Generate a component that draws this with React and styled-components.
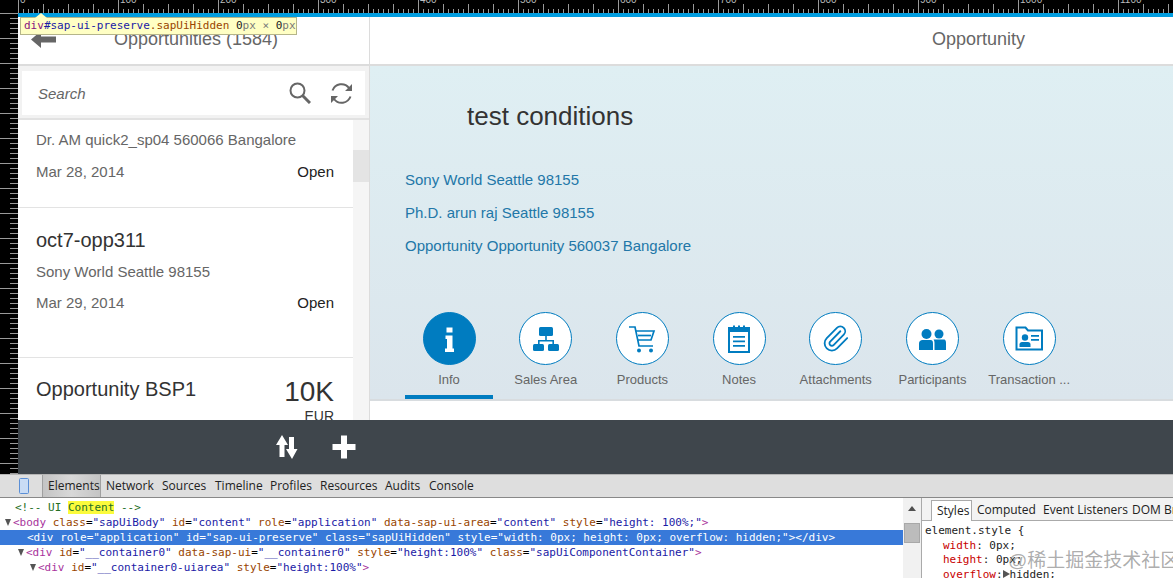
import React from 'react'
import styled, { createGlobalStyle } from 'styled-components'
import { Paperclip } from 'lucide-react'

const GlobalStyle = createGlobalStyle`
  html, body { margin: 0; padding: 0; background: #fff; }
  * { box-sizing: border-box; }
`

const Page = styled.div`
  position: relative;
  width: 1173px;
  height: 578px;
  overflow: hidden;
  font-family: "Liberation Sans", Arial, sans-serif;
`
const RulerTop = styled.svg`
  display: block;
  width: 1173px;
  height: 13px;
  background: #000;
`
const RulerLeft = styled.svg`
  display: block;
  flex: none;
  width: 18px;
  height: 461px;
  background: #000;
`
const Shell = styled.div`
  display: flex;
  height: 461px;
`
const Main = styled.div`
  flex: 1;
  min-width: 0;
  display: flex;
  flex-direction: column;
`
const BlueBar = styled.div`
  height: 4px;
  background: #009de0;
`
const Panels = styled.div`
  display: flex;
  height: 403px;
`
const Master = styled.div`
  flex: none;
  width: 352px;
  border-right: 1px solid #dcdcdc;
  display: flex;
  flex-direction: column;
`
const HeaderBar = styled.div`
  flex: none;
  height: 49px;
  border-bottom: 2px solid #dcdcdc;
  display: flex;
  align-items: center;
  position: relative;
  padding: ${(p) => (p.$detail ? '0 0 2px 562px' : '0 0 2px 96px')};
  font-size: 18px;
  color: #666;
  white-space: nowrap;
`
const BackIcon = styled.svg`
  position: absolute;
  left: 13px;
  top: 14px;
  width: 26px;
  height: 17px;
`
const SearchWrap = styled.div`
  flex: none;
  height: 54px;
  padding: 5px 4px 5px;
  background: #f2f2f2;
  border-bottom: 2px solid #e2e2e2;
`
const SearchInner = styled.div`
  height: 44px;
  background: #fff;
  display: flex;
  align-items: center;
  padding: 0 12px 0 16px;
`
const SearchText = styled.span`
  flex: 1;
  font-size: 15px;
  font-style: italic;
  color: #666;
`
const ToolIcon = styled.svg`
  display: block;
  width: ${(p) => p.$size}px;
  height: ${(p) => p.$size}px;
  margin-left: ${(p) => p.$gap || 0}px;
`
const ListArea = styled.div`
  flex: 1;
  min-height: 0;
  display: flex;
  overflow: hidden;
`
const List = styled.div`
  flex: 1;
  min-width: 0;
  overflow: hidden;
`
const ScrollTrack = styled.div`
  flex: none;
  width: 16px;
  background: #f5f5f5;
  padding-top: 30px;
`
const ScrollThumb = styled.div`
  height: 32px;
  background: #e4e4e4;
`
const Item = styled.div`
  height: ${(p) => p.$height}px;
  padding: 0 19px 0 18px;
  border-bottom: 1px solid #e3e3e3;
`
const ItemRow = styled.div`
  display: flex;
  justify-content: space-between;
  align-items: ${(p) => p.$top ? 'flex-start' : 'center'};
  margin-top: ${(p) => p.$mt || 0}px;
  height: ${(p) => p.$h || 20}px;
`
const ItemTitle = styled.div`
  font-size: 20px;
  line-height: 24px;
  color: #333;
`
const ItemSub = styled.div`
  font-size: 15px;
  line-height: 20px;
  color: #666;
`
const ItemStatus = styled.div`
  font-size: 15px;
  line-height: 20px;
  color: #222;
`
const Amount = styled.div`
  text-align: right;
  color: #333;
  font-size: 28px;
  line-height: 30px;
`
const Currency = styled.div`
  font-size: 14px;
  line-height: 16px;
  margin-top: 1px;
`
const Detail = styled.div`
  flex: 1;
  min-width: 0;
  display: flex;
  flex-direction: column;
`
const DetailHead = styled.div`
  height: 335px;
  background: linear-gradient(180deg, #dfeff3 0%, #dbe5ec 100%);
  border-bottom: 2px solid #d8dcdf;
  display: flex;
  flex-direction: column;
  padding-left: 35px;
`
const DetailTitle = styled.div`
  margin: 35px 0 0 62px;
  font-size: 26px;
  line-height: 30px;
  color: #333;
`
const Links = styled.div`
  margin-top: 32px;
  display: flex;
  flex-direction: column;
`
const LinkText = styled.div`
  font-size: 15px;
  line-height: 33px;
  color: #2277a8;
`
const Tabs = styled.div`
  margin-top: auto;
  display: flex;
  gap: 8.7px;
`
const Tab = styled.div`
  width: 88px;
  height: 87px;
  display: flex;
  flex-direction: column;
  align-items: center;
  border-bottom: 4px solid ${(p) => (p.$active ? '#007cc0' : 'transparent')};
`
const TabCircle = styled.div`
  width: 53px;
  height: 53px;
  border-radius: 50%;
  border: 1.5px solid #007cc0;
  background: ${(p) => (p.$active ? '#007cc0' : '#fff')};
  color: ${(p) => (p.$active ? '#fff' : '#007cc0')};
  display: flex;
  align-items: center;
  justify-content: center;
`
const TabLabel = styled.div`
  margin-top: 7px;
  font-size: 13px;
  line-height: 15px;
  color: #666;
  white-space: nowrap;
`
const Footer = styled.div`
  height: 54px;
  background: #3f464c;
  display: flex;
  align-items: center;
  padding-left: 257px;
`
const FooterIcon = styled.svg`
  display: block;
  width: 26px;
  height: 26px;
  margin-right: 30px;
`
const DevTools = styled.div`
  height: 104px;
  display: flex;
  flex-direction: column;
  background: #fff;
  overflow: hidden;
`
const DevToolbar = styled.div`
  flex: none;
  height: 24px;
  background: #dedede;
  border-top: 1px solid #b5b5b5;
  border-bottom: 1px solid #888;
  display: flex;
  align-items: stretch;
  font-family: "Open Sans", "Liberation Sans", sans-serif;
  font-size: 12px;
  color: #222;
`
const PhoneIcon = styled.svg`
  display: block;
  width: 10px;
  height: 16px;
  margin: 3px 13px 0 19px;
`
const DevTab = styled.div`
  width: ${(p) => p.$w}px;
  line-height: 22px;
  padding-left: 5px;
  white-space: nowrap;
  ${(p) => p.$active && `
    background: linear-gradient(90deg, #c4c4c4 0%, #d8d8d8 50%, #c4c4c4 100%);
    border-left: 1px solid #a0a0a0;
    border-right: 1px solid #a0a0a0;
  `}
`
const DevSplit = styled.div`
  flex: 1;
  min-height: 0;
  display: flex;
`
const Elements = styled.div`
  flex: none;
  width: 903px;
  padding-top: 2px;
  overflow: hidden;
  font-family: "DejaVu Sans Mono", "Liberation Mono", monospace;
  font-size: 11px;
`
const Row = styled.div`
  height: 15px;
  line-height: 15px;
  white-space: nowrap;
  padding-left: ${(p) => p.$indent}px;
  display: flex;
  align-items: center;
  background: ${(p) => (p.$selected ? '#3879d9' : 'transparent')};
  color: ${(p) => (p.$selected ? '#fff' : 'inherit')};
`
const Arrow = styled.i`
  flex: none;
  width: 0;
  height: 0;
  margin-right: 2px;
  border-left: 3.5px solid transparent;
  border-right: 3.5px solid transparent;
  border-top: 7px solid #555;
`
const Tag = styled.span`
  color: ${(p) => (p.$white ? '#fff' : '#a8339c')};
`
const Attr = styled.span`
  color: ${(p) => (p.$white ? '#fff' : '#994500')};
`
const Val = styled.span`
  color: ${(p) => (p.$white ? '#fff' : '#1a1aa6')};
`
const Comment = styled.span`
  color: #236e25;
`
const Mark = styled.span`
  background: #fbfb3c;
`
const DevScroll = styled.div`
  flex: none;
  width: 19px;
  background: #f1f1f1;
  border-right: 1px solid #aaa;
  display: flex;
  flex-direction: column;
  align-items: center;
  padding-top: 8px;
`
const ScrollUp = styled.i`
  width: 0;
  height: 0;
  border-left: 4px solid transparent;
  border-right: 4px solid transparent;
  border-bottom: 5px solid #505050;
`
const DevThumb = styled.div`
  width: 16px;
  height: 20px;
  margin-top: 12px;
  background: #bcbcbc;
  border: 1px solid #a8a8a8;
`
const StylesPane = styled.div`
  flex: 1;
  min-width: 0;
  display: flex;
  flex-direction: column;
  overflow: hidden;
`
const StylesTabs = styled.div`
  flex: none;
  height: 23px;
  padding: 2px 0 0 9px;
  display: flex;
  background: #f3f3f3;
  border-bottom: 1px solid #aaa;
  font-family: "Open Sans", "Liberation Sans", sans-serif;
  font-size: 12px;
  color: #222;
  white-space: nowrap;
`
const StylesTab = styled.div`
  flex: none;
  width: ${(p) => p.$w}px;
  line-height: 20px;
  padding-left: 5px;
  ${(p) => p.$active && `
    background: #fff;
    border: 1px solid #aaa;
    border-bottom: none;
    height: 21px;
  `}
`
const Css = styled.div`
  font-family: "DejaVu Sans Mono", "Liberation Mono", monospace;
  font-size: 11px;
  padding: 3px 0 0 3px;
`
const CssLine = styled.div`
  height: 14.5px;
  line-height: 14.5px;
  white-space: nowrap;
  color: #222;
  padding-left: ${(p) => (p.$prop ? 18 : 0)}px;
`
const CssProp = styled.span`
  color: #c80000;
`
const CssTri = styled.i`
  display: inline-block;
  width: 0;
  height: 0;
  border-top: 4px solid transparent;
  border-bottom: 4px solid transparent;
  border-left: 7px solid #555;
`
const Tooltip = styled.div`
  position: absolute;
  left: 20px;
  top: 17px;
  height: 18px;
  width: 277px;
  padding-left: 3px;
  background: #ffffc4;
  border: 1px solid #b5b58a;
  font-family: "DejaVu Sans Mono", "Liberation Mono", monospace;
  font-size: 11px;
  line-height: 16px;
  white-space: nowrap;
  color: #777;
  &::before {
    content: "";
    position: absolute;
    left: 14px;
    top: -5px;
    border-left: 6px solid transparent;
    border-right: 6px solid transparent;
    border-bottom: 5px solid #ffffc4;
  }
`
const TipTag = styled.span`
  color: #881280;
`
const TipId = styled.span`
  color: #1a1aa6;
`
const TipClass = styled.span`
  color: #994500;
`
const TipNum = styled.span`
  color: #222;
`
const Watermark = styled.div`
  position: absolute;
  left: 1008px;
  top: 549px;
  font-family: "Liberation Sans", "Noto Sans CJK SC", sans-serif;
  font-size: 19px;
  line-height: 24px;
  color: rgba(120, 120, 120, 0.62);
  white-space: nowrap;
`

const topTicks = Array.from({ length: 235 }, (_, i) => i * 5)
const leftTicks = Array.from({ length: 93 }, (_, i) => i * 5)
const tabs = [
  { label: 'Info', active: true, icon: 'info' },
  { label: 'Sales Area', icon: 'org' },
  { label: 'Products', icon: 'cart' },
  { label: 'Notes', icon: 'notes' },
  { label: 'Attachments', icon: 'clip' },
  { label: 'Participants', icon: 'people' },
  { label: 'Transaction ...', icon: 'card' }
]

const TabIcon = ({ name }) => {
  if (name === 'clip') return <Paperclip size={29} strokeWidth={1.5} />
  const size = 30
  return (
    <svg width={size} height={size} viewBox="0 0 30 30" fill="currentColor">
      {name === 'info' && (
        <path d="M12.5 3.5h6v5h-6zM11.5 11.5h7v13h1.5v3.5h-9v-3.5h2v-9.5h-1.5z" />
      )}
      {name === 'org' && (
        <>
          <rect x="8" y="3" width="14" height="9" rx="1.5" />
          <rect x="2" y="20" width="11" height="7" rx="1.5" />
          <rect x="17" y="20" width="11" height="7" rx="1.5" />
          <path d="M14.2 12h1.6v4H23v4h-1.6v-2.4H8.6V20H7v-4h7.2z" />
        </>
      )}
      {name === 'cart' && (
        <>
          <path d="M2 3h6l4 19h14" fill="none" stroke="currentColor" strokeWidth="1.7" />
          <path d="M9 7h18l-3 9H11" fill="none" stroke="currentColor" strokeWidth="1.7" />
          <path d="M11 11.5h13" fill="none" stroke="currentColor" strokeWidth="1.7" />
          <circle cx="12" cy="26.5" r="2" />
          <circle cx="24" cy="26.5" r="2" />
        </>
      )}
      {name === 'notes' && (
        <>
          <path d="M5 4h20v24H5z" fill="none" stroke="currentColor" strokeWidth="2" />
          <path d="M5 4h20v4H5zM9 1.5h2v4H9zM14 1.5h2v4h-2zM19 1.5h2v4h-2z" />
          <path d="M9 12h12v1.8H9zM9 16.5h12v1.8H9zM9 21h12v1.8H9z" />
        </>
      )}
      {name === 'people' && (
        <>
          <circle cx="9.5" cy="10" r="5" />
          <path d="M2 26v-6.5c0-2 1.5-3.500 3.500-3.500h8c2 0 2.500 1.500 2.500 3.500V26z" />
          <circle cx="22" cy="10" r="4.500" />
          <path d="M17.500 26v-7c0-2-.5-3-1-3.500h11c1 .5 1.500 1.500 1.500 3.500v7z" />
        </>
      )}
      {name === 'card' && (
        <>
          <path d="M2.500 9V3.500h9l2.500 3h14v19H2.500z" fill="none" stroke="currentColor" strokeWidth="2" />
          <circle cx="11" cy="13.500" r="3.200" />
          <path d="M5.500 23v-2.500c0-1.500 1-2.500 2.500-2.500h6c1.500 0 2.500 1 2.500 2.500V23z" />
          <path d="M17 11h8v1.800h-8zM17 15h8v1.800h-8z" />
        </>
      )}
    </svg>
  )
}

export default function App() {
  return (
    <Page>
      <GlobalStyle />
      <RulerTop viewBox="0 0 1173 13">
        {topTicks.map((t) => {
          const major = t % 25 === 0
          const full = t % 100 === 0
          return (
            <line key={t} x1={18.5 + t} x2={18.5 + t} y1={full ? 0 : major ? 4 : 9} y2="13" stroke="#9a9a9a" />
          )
        })}
        {[0, 100, 200, 300, 400, 500, 600, 700, 800, 900, 1000, 1100].map((t) => (
          <text key={t} x={20 + t} y="3" fill="#bbb" fontSize="10" fontFamily="Liberation Sans">{t}</text>
        ))}
      </RulerTop>
      <Shell>
        <RulerLeft viewBox="0 0 18 461">
          {leftTicks.map((t) => (
            <line key={t} x1={t % 25 === 0 ? 0 : 10} x2="18" y1={t + 0.5} y2={t + 0.5} stroke="#9a9a9a" />
          ))}
        </RulerLeft>
        <Main>
          <BlueBar />
          <Panels>
            <Master>
              <HeaderBar>
                <BackIcon viewBox="0 0 26 17">
                  <path d="M10 0 0 8.500 10 17v-5.500h15v-6H10z" fill="#666" />
                </BackIcon>
                Opportunities (1584)
              </HeaderBar>
              <SearchWrap>
                <SearchInner>
                  <SearchText>Search</SearchText>
                  <ToolIcon $size={22} viewBox="0 0 22 22">
                    <circle cx="8.500" cy="8.500" r="7" fill="none" stroke="#666" strokeWidth="2" />
                    <path d="M13.500 13.500 21 21" stroke="#666" strokeWidth="3" />
                  </ToolIcon>
                  <ToolIcon $size={23} $gap={19} viewBox="0 0 23 23">
                    <path d="M2.500 8.500A9.500 9.500 0 0 1 19 6" fill="none" stroke="#666" strokeWidth="2" />
                    <path d="M20.500 14.500A9.500 9.500 0 0 1 4 17" fill="none" stroke="#666" strokeWidth="2" />
                    <path d="M22 2v7h-7zM1 21v-7h7z" fill="#666" />
                  </ToolIcon>
                </SearchInner>
              </SearchWrap>
              <ListArea>
                <List>
                  <Item $height={88}>
                    <ItemSub style={{ paddingTop: 10 }}>Dr. AM quick2_sp04 560066 Bangalore</ItemSub>
                    <ItemRow $mt={12}>
                      <ItemSub>Mar 28, 2014</ItemSub>
                      <ItemStatus>Open</ItemStatus>
                    </ItemRow>
                  </Item>
                  <Item $height={130}>
                    <ItemRow $mt={20} $h={24}>
                      <ItemTitle>oct7-opp311</ItemTitle>
                    </ItemRow>
                    <ItemRow $mt={10}>
                      <ItemSub>Sony World Seattle 98155</ItemSub>
                    </ItemRow>
                    <ItemRow $mt={11}>
                      <ItemSub>Mar 29, 2014</ItemSub>
                      <ItemStatus>Open</ItemStatus>
                    </ItemRow>
                  </Item>
                  <Item $height={130}>
                    <ItemRow $top $mt={19} $h={47}>
                      <ItemTitle>Opportunity BSP1</ItemTitle>
                      <Amount>
                        10K
                        <Currency>EUR</Currency>
                      </Amount>
                    </ItemRow>
                    <ItemRow $mt={6}>
                      <ItemSub>Fiori Inc. 560066 Bangalore</ItemSub>
                    </ItemRow>
                  </Item>
                </List>
                <ScrollTrack>
                  <ScrollThumb />
                </ScrollTrack>
              </ListArea>
            </Master>
            <Detail>
              <HeaderBar $detail>Opportunity</HeaderBar>
              <DetailHead>
                <DetailTitle>test conditions</DetailTitle>
                <Links>
                  <LinkText>Sony World Seattle 98155</LinkText>
                  <LinkText>Ph.D. arun raj Seattle 98155</LinkText>
                  <LinkText>Opportunity Opportunity 560037 Bangalore</LinkText>
                </Links>
                <Tabs>
                  {tabs.map((tab) => (
                    <Tab key={tab.label} $active={tab.active}>
                      <TabCircle $active={tab.active}>
                        <TabIcon name={tab.icon} />
                      </TabCircle>
                      <TabLabel>{tab.label}</TabLabel>
                    </Tab>
                  ))}
                </Tabs>
              </DetailHead>
            </Detail>
          </Panels>
          <Footer>
            <FooterIcon viewBox="0 0 26 26">
              <path d="M7.500 1 14 11h-4v13H5V11H1zM13 2h5v13h4l-6.500 10L9 15" fill="none" />
              <path d="M7 1 13 11H9.500v12h-5V11H1zM14 3h5v12h3.500L17 25l-6-10h3z" fill="#fff" />
            </FooterIcon>
            <FooterIcon viewBox="0 0 26 26">
              <path d="M10 1.500h6v8.500h8.500v6H16v8.500h-6V16H1.500v-6H10z" fill="#fff" />
            </FooterIcon>
          </Footer>
        </Main>
      </Shell>
      <DevTools>
        <DevToolbar>
          <PhoneIcon viewBox="0 0 10 16">
            <rect x="0.500" y="0.500" width="9" height="15" rx="1" fill="#c9dcf5" stroke="#5b8fd6" />
          </PhoneIcon>
          <DevTab $w={59} $active>Elements</DevTab>
          <DevTab $w={56}>Network</DevTab>
          <DevTab $w={53}>Sources</DevTab>
          <DevTab $w={55}>Timeline</DevTab>
          <DevTab $w={50}>Profiles</DevTab>
          <DevTab $w={65}>Resources</DevTab>
          <DevTab $w={44}>Audits</DevTab>
          <DevTab $w={60}>Console</DevTab>
        </DevToolbar>
        <DevSplit>
          <Elements>
            <Row $indent={15}>
              <Comment>{'<!-- UI '}<Mark>Content</Mark>{' -->'}</Comment>
            </Row>
            <Row $indent={5}>
              <Arrow />
              <span>
                <Tag>{'<body '}</Tag><Attr>class</Attr>=<Val>"sapUiBody"</Val> <Attr>id</Attr>=<Val>"content"</Val> <Attr>role</Attr>=<Val>"application"</Val> <Attr>data-sap-ui-area</Attr>=<Val>"content"</Val> <Attr>style</Attr>=<Val>"height: 100%;"</Val><Tag>{'>'}</Tag>
              </span>
            </Row>
            <Row $indent={27} $selected>
              <span>
                <Tag $white>{'<div '}</Tag><Attr $white>role</Attr>=<Val $white>"application"</Val> <Attr $white>id</Attr>=<Val $white>"sap-ui-preserve"</Val> <Attr $white>class</Attr>=<Val $white>"sapUiHidden"</Val> <Attr $white>style</Attr>=<Val $white>"width: 0px; height: 0px; overflow: hidden;"</Val><Tag $white>{'></div>'}</Tag>
              </span>
            </Row>
            <Row $indent={18}>
              <Arrow />
              <span>
                <Tag>{'<div '}</Tag><Attr>id</Attr>=<Val>"__container0"</Val> <Attr>data-sap-ui</Attr>=<Val>"__container0"</Val> <Attr>style</Attr>=<Val>"height:100%"</Val> <Attr>class</Attr>=<Val>"sapUiComponentContainer"</Val><Tag>{'>'}</Tag>
              </span>
            </Row>
            <Row $indent={30}>
              <Arrow />
              <span>
                <Tag>{'<div '}</Tag><Attr>id</Attr>=<Val>"__container0-uiarea"</Val> <Attr>style</Attr>=<Val>"height:100%"</Val><Tag>{'>'}</Tag>
              </span>
            </Row>
            <Row $indent={52}>
              <span>
                <Tag>{'<div '}</Tag><Attr>id</Attr>=<Val>"__xmlview0"</Val> <Attr>data-sap-ui</Attr>=<Val>"__xmlview0"</Val> <Attr>style</Attr>=<Val>"width: 100%; height: 100%;"</Val> <Attr>class</Attr>=<Val>"sapUiView sapUiXMLView"</Val><Tag>{'>'}</Tag>
              </span>
            </Row>
          </Elements>
          <DevScroll>
            <ScrollUp />
            <DevThumb />
          </DevScroll>
          <StylesPane>
            <StylesTabs>
              <StylesTab $w={41} $active>Styles</StylesTab>
              <StylesTab $w={66}>Computed</StylesTab>
              <StylesTab $w={89}>Event Listeners</StylesTab>
              <StylesTab $w={60}>DOM Breakpoints</StylesTab>
            </StylesTabs>
            <Css>
              <CssLine>element.style {'{'}</CssLine>
              <CssLine $prop><CssProp>width</CssProp>: 0px;</CssLine>
              <CssLine $prop><CssProp>height</CssProp>: 0px;</CssLine>
              <CssLine $prop><CssProp>overflow</CssProp>:<CssTri />hidden;</CssLine>
            </Css>
          </StylesPane>
        </DevSplit>
      </DevTools>
      <Tooltip>
        <TipTag>div</TipTag><TipId>#sap-ui-preserve</TipId><TipClass>.sapUiHidden</TipClass> <TipNum>0</TipNum>px × <TipNum>0</TipNum>px
      </Tooltip>
      <Watermark>@稀土掘金技术社区</Watermark>
    </Page>
  )
}
